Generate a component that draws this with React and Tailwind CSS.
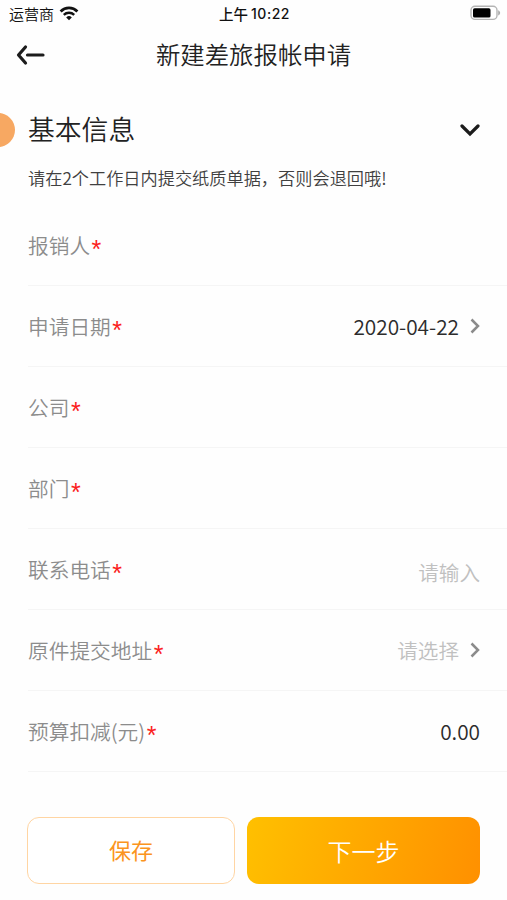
import React, { useState } from "react";

const initialFields = [
  { name: "applicant", label: "报销人" },
  { name: "date", label: "申请日期", value: "2020-04-22", select: true },
  { name: "company", label: "公司" },
  { name: "department", label: "部门" },
  { name: "phone", label: "联系电话", placeholder: "请输入" },
  { name: "address", label: "原件提交地址", placeholder: "请选择", select: true },
  { name: "deduction", label: "预算扣减(元)", value: "0.00" },
];

const StatusBar = () => (
  <div className="grid h-[28px] grid-cols-[1fr_auto_1fr] items-center pr-[6px] pl-[9px] text-[#111]">
    <div className="flex items-center gap-[5px]">
      <span className="text-[15px] leading-[28px] font-[350]">运营商</span>
      <svg className="mb-[2px]" width="20" height="15" viewBox="0 0 20 15" fill="none">
        <path d="M1.600 5.400a12 12 0 0 1 16.800 0" stroke="#111" strokeWidth="2.800" />
        <path d="M4.800 8.800a7.500 7.500 0 0 1 10.400 0" stroke="#111" strokeWidth="2.400" />
        <path d="M10 14.200 7.200 11.400a4 4 0 0 1 5.600 0Z" fill="#111" />
      </svg>
    </div>
    <div className="flex items-center gap-[3px] pr-[1px] text-[14.5px] leading-[28px] font-medium">
      <span>上午</span>
      <span className="font-['Inter',sans-serif] text-[14px] font-medium tracking-[0.5px]">
        10:22
      </span>
    </div>
    <svg className="mb-[2px] justify-self-end" width="31" height="16" viewBox="0 0 31 16">
      <rect x="1" y="1.200" width="26" height="13.200" rx="4" fill="#fff" stroke="#b4b4b4" strokeWidth="1.400" />
      <rect x="3" y="3.300" width="17.500" height="9.200" rx="1.600" fill="#000" />
      <path d="M28.200 5.200c2.600 1.400 2.600 3.800 0 5.200Z" fill="#aaa" />
    </svg>
  </div>
);

const ChevronRight = () => (
  <svg className="ml-[11px]" width="10" height="16" viewBox="0 0 10 16" fill="none">
    <path d="M1.500 1.500 8 8l-6.500 6.500" stroke="#8b8b8b" strokeWidth="2.500" />
  </svg>
);

const FieldRow = ({ field }) => (
  <div className="flex h-[81px] items-center justify-between border-b-[1.500px] border-[#f5f5f5] pr-[27px]">
    <div className="flex items-center text-[20.7px] leading-[30px] font-[350] text-[#8c8c8c]">
      <span>{field.label}</span>
      <span className="ml-[1.5px] pt-[7px] font-['Liberation_Sans',sans-serif] text-[25px] leading-[22px] font-normal text-[#fb2020]">
        *
      </span>
    </div>
    <div className="flex items-center text-[20.6px] leading-[30px]">
      {field.value ? (
        <span className="pb-[1px] text-[20.8px] font-[350] text-[#2c2c2c]">
          {field.value}
        </span>
      ) : (
        <span
          className={
            field.select
              ? "font-[350] text-[#c0c0c0]"
              : "pt-[6px] font-[350] text-[#c0c0c0]"
          }
        >
          {field.placeholder}
        </span>
      )}
      {field.select && <ChevronRight />}
    </div>
  </div>
);

const App = () => {
  const [open, setOpen] = useState(true);

  return (
    <div className="h-[900px] w-[507px] overflow-hidden bg-[#fefefe] font-['Noto_Sans_CJK_SC',sans-serif]">
      <StatusBar />

      <header className="grid h-[53px] grid-cols-[1fr_auto_1fr] items-center pr-[16px] pb-[1px] pl-[16px]">
        <button type="button" aria-label="返回" className="pt-[1px]">
          <svg width="30" height="22" viewBox="0 0 30 22" fill="none" stroke="#1c1c1c" strokeWidth="3.200" strokeLinecap="round" strokeLinejoin="round">
            <path d="M9.500 3 2.500 11l7 8" />
            <path d="M11.500 11H27" />
          </svg>
        </button>
        <h1 className="text-[24.4px] leading-[36px] font-[350] text-[#222]">
          新建差旅报帐申请
        </h1>
      </header>

      <main>
        <div className="flex h-[82px] items-center pt-[14px]">
          <span className="mt-[2px] -ml-[19px] size-[34px] rounded-full bg-[#f7a862]" />
          <h2 className="ml-[13px] flex-1 pb-[1px] text-[26.8px] leading-[40px] font-[350] text-[#222]">
            基本信息
          </h2>
          <button
            type="button"
            aria-label="展开"
            className="mt-[2px] mr-[27px]"
            onClick={() => setOpen(!open)}
          >
            <svg width="20" height="14" viewBox="0 0 20 14" fill="none">
              <path d="m2 3 8 8 8-8" stroke="#1c1c1c" strokeWidth="3.200" strokeLinecap="round" />
            </svg>
          </button>
        </div>
        <p className="h-[42px] pt-[1px] pl-[28px] text-[17.2px] leading-[28px] font-[350] text-[#404040]">
          请在2个工作日内提交纸质单据，否则会退回哦!
        </p>

        {open && (
          <div className="pl-[28px]">
            {initialFields.map((field) => (
              <FieldRow key={field.name} field={field} />
            ))}
          </div>
        )}
      </main>

      <footer className="mt-[44px] flex gap-[12px] pt-[1px] pr-[27px] pl-[27px]">
        <button
          type="button"
          className="h-[67px] w-[208px] rounded-[12px] border-[1.500px] border-[#ffd5a3] bg-white pb-[2px] text-[22px] text-[#fb9420]"
        >
          保存
        </button>
        <button
          type="button"
          className="h-[67px] flex-1 rounded-[12px] bg-[linear-gradient(105deg,#ffc000,#ff9000)] text-[24px] font-[350] text-white"
        >
          下一步
        </button>
      </footer>
    </div>
  );
};

export default App;
